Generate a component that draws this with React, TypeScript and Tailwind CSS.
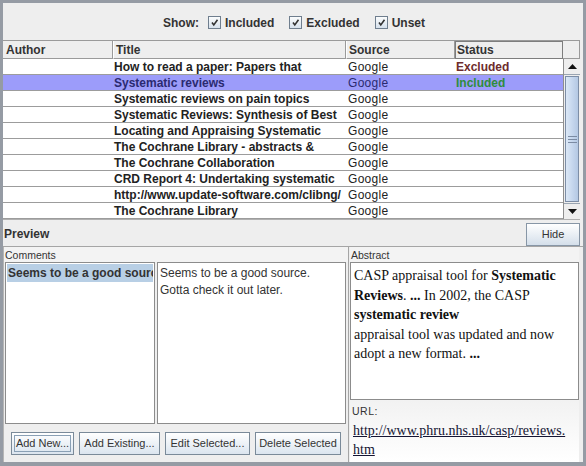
import React from "react";

const rows: { title: string; status?: "Excluded" | "Included"; selected?: boolean }[] = [
  { title: "How to read a paper: Papers that", status: "Excluded" },
  { title: "Systematic reviews", status: "Included", selected: true },
  { title: "Systematic reviews on pain topics" },
  { title: "Systematic Reviews: Synthesis of Best" },
  { title: "Locating and Appraising Systematic" },
  { title: "The Cochrane Library - abstracts &" },
  { title: "The Cochrane Collaboration" },
  { title: "CRD Report 4: Undertaking systematic" },
  { title: "http://www.update-software.com/clibng/" },
  { title: "The Cochrane Library" },
];

function Check({ label }: { label: string }) {
  return (
    <div className="flex items-center gap-[4px]">
      <div className="w-[13px] h-[13px] border border-[#6f7e8e] bg-gradient-to-b from-[#fbfcfd] to-[#d6e1ec] flex items-center justify-center">
        <svg width="9" height="9" viewBox="0 0 9 9">
          <path d="M2 4.5 L3.8 7 L7.5 1.8" stroke="#333" strokeWidth="1.6" fill="none" />
        </svg>
      </div>
      <span>{label}</span>
    </div>
  );
}

function Btn({ label, focus, w }: { label: string; focus?: boolean; w: string }) {
  return (
    <div
      className={`${w} h-[23px] border border-[#7a8a99] bg-gradient-to-b from-[#ffffff] to-[#dbe5ef] flex items-center justify-center text-[11px] text-[#333] p-[2px]`}
    >
      <div className={`w-full h-full flex items-center justify-center ${focus ? "border border-[#8aa0b5]" : ""}`}>
        {label}
      </div>
    </div>
  );
}

export default function App() {
  return (
    <div
      className="w-[586px] h-[466px] bg-[#eeeeee] border-l-[3px] border-t-[3px] border-r-[3px] border-b-[4px] border-[#959ba4] flex flex-col overflow-hidden"
      style={{ fontFamily: '"Liberation Sans", Arial, sans-serif' }}
    >
      {/* Show row */}
      <div className="h-[37px] flex items-center pl-[160px] pt-[2px] text-[12px] font-bold text-[#333] shrink-0">
        <span className="mr-[9px]">Show:</span>
        <div className="flex items-center gap-[15px]">
          <Check label="Included" />
          <Check label="Excluded" />
          <Check label="Unset" />
        </div>
      </div>

      {/* Table */}
      <div className="w-[577px] shrink-0 flex flex-col border-b border-[#b0b0b0]">
        <div className="h-[19px] flex border-t border-[#9a9a9a] text-[12px] font-bold text-[#333] bg-[#eeeeee]">
          <div className="w-[110px] border-r border-b border-[#9a9a9a] pl-[3px] flex items-center">Author</div>
          <div className="w-[233px] border-r border-b border-[#9a9a9a] pl-[2px] flex items-center border-l border-l-white">Title</div>
          <div className="w-[109px] border-r border-b border-[#9a9a9a] pl-[2px] flex items-center border-l border-l-white">Source</div>
          <div className="w-[108px] border border-[#7d7d7d] pl-[1px] flex items-center">Status</div>
          <div className="flex-1 border-b border-r border-[#9a9a9a]"></div>
        </div>
        <div className="flex h-[160px]">
          <div className="flex-1 bg-white flex flex-col">
            {rows.map((r, i) => (
              <div
                key={i}
                className={`h-[16px] flex items-center border-b border-[#9c9c9c] text-[12px] ${r.selected ? "bg-[#9c9cfa] text-[#2a2a70]" : "text-[#222]"}`}
              >
                <div className="w-[110px]"></div>
                <div className="w-[233px] pl-[1px] font-bold whitespace-nowrap overflow-hidden">{r.title}</div>
                <div className="w-[109px] pl-[2px] whitespace-nowrap tracking-[0.3px]">Google</div>
                <div
                  className={`flex-1 pl-[1px] font-bold ${r.status === "Excluded" ? "text-[#6e2c2c]" : r.status === "Included" ? "text-[#2f8c3c]" : ""}`}
                >
                  {r.status ?? ""}
                </div>
              </div>
            ))}
          </div>
          {/* scrollbar */}
          <div className="w-[17px] border-l border-[#8e8e8e] bg-[#eeeeee] flex flex-col">
            <div className="h-[16px] border-b border-[#9aa5b2] flex items-center justify-center bg-[#eeeeee]">
              <svg width="9" height="5" viewBox="0 0 9 5"><path d="M0 5 L4.5 0 L9 5 Z" fill="#111" /></svg>
            </div>
            <div className="flex-1 flex flex-col px-[1px] py-[1px]">
              <div className="flex-1 border border-[#7d8ea6] bg-gradient-to-r from-[#dce8f6] via-[#c7d8ee] to-[#b4c8e3] flex items-center justify-center">
                <div className="flex flex-col gap-[2px]">
                  <div className="w-[9px] h-[1px] bg-[#7b8ba3]"></div>
                  <div className="w-[9px] h-[1px] bg-[#7b8ba3]"></div>
                  <div className="w-[9px] h-[1px] bg-[#7b8ba3]"></div>
                </div>
              </div>
            </div>
            <div className="h-[16px] border-t border-[#9aa5b2] flex items-center justify-center bg-[#eeeeee]">
              <svg width="9" height="5" viewBox="0 0 9 5"><path d="M0 0 L4.5 5 L9 0 Z" fill="#111" /></svg>
            </div>
          </div>
        </div>
      </div>

      {/* Preview bar */}
      <div className="h-[25px] shrink-0 flex items-center justify-between pr-[3px] mt-[2px] border-b border-[#a5a5a5]">
        <span className="text-[12px] font-bold text-[#333] pl-[1px]">Preview</span>
        <div className="w-[54px] h-[23px] border border-[#8796a6] bg-gradient-to-b from-[#ffffff] to-[#d4dfea] flex items-center justify-center text-[11px] text-[#333]">
          Hide
        </div>
      </div>

      {/* Bottom panels */}
      <div className="flex-1 flex min-h-0">
        <div className="w-[346px] flex flex-col border-r border-[#a5a5a5] border-l border-l-[#b5b5b5]">
          <div className="h-[15px] pl-[1px] pt-[2px] text-[10.5px] leading-[12px] text-[#333] bg-[#f3f3f3]">Comments</div>
          <div className="h-[162px] flex gap-[2px] pl-[1px] pr-[2px]">
            <div className="w-[150px] bg-white border border-[#8c8c8c] pt-[1px] px-[1px] overflow-hidden">
              <div className="h-[18px] bg-[#b8cfe5] text-[12px] font-bold text-[#333] whitespace-nowrap overflow-hidden flex items-center pl-[1px]">
                Seems to be a good source.
              </div>
            </div>
            <div className="flex-1 bg-white border border-[#8c8c8c] px-[2px] pt-[2px] text-[12px] leading-[17px] text-[#333]">
              <div>Seems to be a good source.</div>
              <div>Gotta check it out later.</div>
            </div>
          </div>
          <div className="flex-1 flex items-center gap-[5px] pl-[7px] pt-[1px]">
            <Btn label="Add New..." focus w="w-[63px]" />
            <Btn label="Add Existing..." w="w-[81px]" />
            <Btn label="Edit Selected..." w="w-[85px]" />
            <Btn label="Delete Selected" w="w-[86px]" />
          </div>
        </div>
        <div className="flex-1 flex flex-col pl-[1px] pr-[4px]">
          <div className="h-[15px] pl-[1px] pt-[2px] text-[10.5px] leading-[12px] text-[#333] bg-[#f3f3f3]">Abstract</div>
          <div
            className="h-[138px] bg-white border border-[#8c8c8c] px-[3px] pt-[3px] text-[14px] leading-[19.5px] text-[#111]"
            style={{ fontFamily: '"Liberation Serif", "Times New Roman", serif' }}
          >
            <div>
              CASP appraisal tool for <b>Systematic</b>
            </div>
            <div>
              <b>Reviews</b>. <b>...</b> In 2002, the CASP
            </div>
            <div>
              <b>systematic review</b>
            </div>
            <div>appraisal tool was updated and now</div>
            <div>
              adopt a new format. <b>...</b>
            </div>
          </div>
          <div className="flex-1 bg-gradient-to-b from-[#f2f2f2] to-[#ffffff] flex flex-col">
            <div className="h-[19px] pl-[2px] pt-[5px] text-[10.5px] leading-[12px] text-[#333] tracking-[0.5px]">URL:</div>
            <div
              className="pl-[3px] pt-[2px] text-[14px] leading-[19px] text-[#141433] underline"
              style={{ fontFamily: '"Liberation Serif", "Times New Roman", serif' }}
            >
              <div>http://www.phru.nhs.uk/casp/reviews.</div>
              <div>htm</div>
            </div>
          </div>
        </div>
      </div>
    </div>
  );
}
